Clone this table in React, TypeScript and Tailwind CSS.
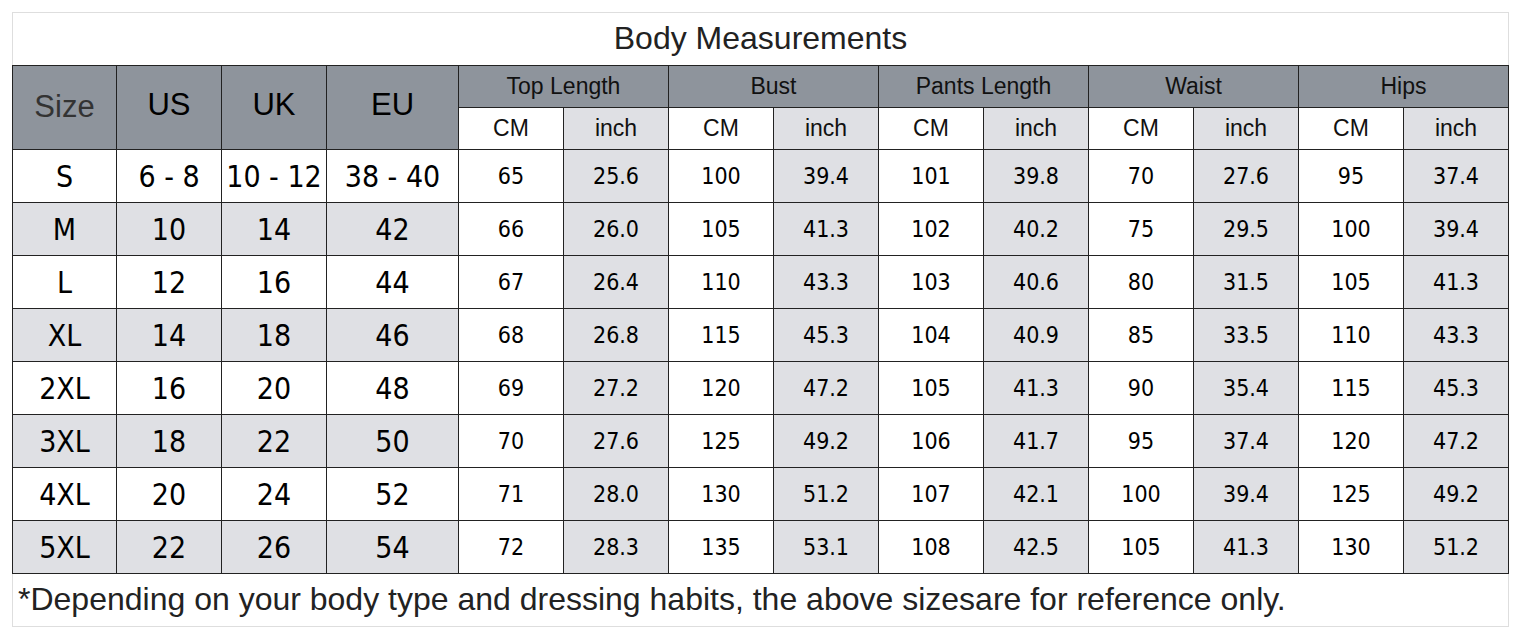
const GROUPS = ["Top Length", "Bust", "Pants Length", "Waist", "Hips"];

type Row = {
  size: string;
  us: string;
  uk: string;
  eu: string;
  values: string[];
};

const ROWS: Row[] = [
  { size: "S", us: "6 - 8", uk: "10 - 12", eu: "38 - 40", values: ["65", "25.6", "100", "39.4", "101", "39.8", "70", "27.6", "95", "37.4"] },
  { size: "M", us: "10", uk: "14", eu: "42", values: ["66", "26.0", "105", "41.3", "102", "40.2", "75", "29.5", "100", "39.4"] },
  { size: "L", us: "12", uk: "16", eu: "44", values: ["67", "26.4", "110", "43.3", "103", "40.6", "80", "31.5", "105", "41.3"] },
  { size: "XL", us: "14", uk: "18", eu: "46", values: ["68", "26.8", "115", "45.3", "104", "40.9", "85", "33.5", "110", "43.3"] },
  { size: "2XL", us: "16", uk: "20", eu: "48", values: ["69", "27.2", "120", "47.2", "105", "41.3", "90", "35.4", "115", "45.3"] },
  { size: "3XL", us: "18", uk: "22", eu: "50", values: ["70", "27.6", "125", "49.2", "106", "41.7", "95", "37.4", "120", "47.2"] },
  { size: "4XL", us: "20", uk: "24", eu: "52", values: ["71", "28.0", "130", "51.2", "107", "42.1", "100", "39.4", "125", "49.2"] },
  { size: "5XL", us: "22", uk: "26", eu: "54", values: ["72", "28.3", "135", "53.1", "108", "42.5", "105", "41.3", "130", "51.2"] },
];

const sans = "font-['Liberation_Sans','Arial',sans-serif]";
const cond = "font-['DejaVu_Sans_Condensed','DejaVu_Sans',sans-serif] font-stretch-condensed";

export default function App() {
  return (
    <div className="min-h-screen bg-white pl-[12px] pt-[12px]">
      <div className="w-[1497px]">
        {/* titulo */}
        <div
          className={`h-[53px] border-t border-x border-[#dedede] flex items-center justify-center pb-[3px] text-[32px] text-[#222] ${sans}`}
        >
          Body Measurements
        </div>

        {/* grade da tabela: fundo escuro + gap faz as linhas */}
        <div className="grid grid-cols-[103px_104px_104px_131px_repeat(10,104px)] grid-rows-[41px_41px_repeat(8,52px)] gap-px p-px bg-[#222]">
          <div className={`row-span-2 bg-[#8e949c] flex items-center justify-center text-[31px] text-[#333] ${sans}`}>
            Size
          </div>
          {["US", "UK", "EU"].map((h) => (
            <div
              key={h}
              className={`row-span-2 bg-[#8e949c] flex items-center justify-center pb-[5px] text-[31px] text-black ${sans}`}
            >
              {h}
            </div>
          ))}
          {GROUPS.map((g) => (
            <div
              key={g}
              className={`col-span-2 bg-[#8e949c] flex items-center justify-center text-[23px] text-[#111] ${sans}`}
            >
              {g}
            </div>
          ))}
          {GROUPS.map((g) => [
            <div key={g + "cm"} className={`bg-white flex items-center justify-center text-[23px] text-[#111] ${sans}`}>
              CM
            </div>,
            <div key={g + "in"} className={`bg-[#dfe0e4] flex items-center justify-center text-[23px] text-[#111] ${sans}`}>
              inch
            </div>,
          ])}

          {ROWS.map((r, i) => {
            const bg = i % 2 === 1 ? "bg-[#dfe0e4]" : "bg-white";
            return [
              ...[r.size, r.us, r.uk, r.eu].map((v, j) => (
                <div
                  key={r.size + "-" + j}
                  className={`${bg} flex items-center justify-center whitespace-nowrap text-[30px] text-black ${cond}`}
                >
                  {v}
                </div>
              )),
              ...r.values.map((v, j) => (
                <div
                  key={r.size + "v" + j}
                  className={`${j % 2 === 1 ? "bg-[#dfe0e4]" : "bg-white"} flex items-center justify-center text-[23px] text-black ${cond}`}
                >
                  {v}
                </div>
              )),
            ];
          })}
        </div>

        {/* rodape */}
        <div
          className={`h-[53px] border-b border-x border-[#dedede] flex items-center pl-[5px] pb-[2px] text-[32px] text-[#222] whitespace-nowrap ${sans}`}
        >
          *Depending on your body type and dressing habits, the above sizesare for reference only.
        </div>
      </div>
    </div>
  );
}
